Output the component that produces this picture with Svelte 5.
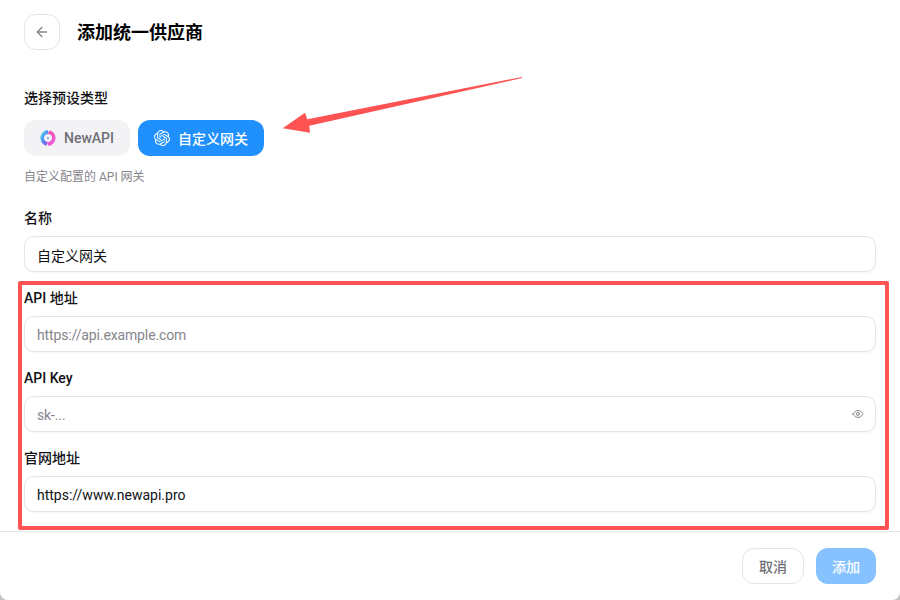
<script lang="ts">
  let showKey = false;
  let name = '自定义网关';
  let baseUrl = '';
  let apiKey = '';
  let website = 'https://www.newapi.pro';
</script>

<div class="page">
  <header class="head">
    <button class="back" type="button" aria-label="返回">
      <svg width="16" height="16" viewBox="0 0 24 24" fill="none" stroke="currentColor" stroke-width="2" stroke-linecap="round" stroke-linejoin="round">
        <path d="M19 12H5" />
        <path d="M12 19l-7-7 7-7" />
      </svg>
    </button>
    <h1>添加统一供应商</h1>
  </header>

  <main class="form">
    <section class="presets">
      <div class="label">选择预设类型</div>
      <div class="chips">
        <button class="chip" type="button">
          <svg width="16" height="16" viewBox="0 0 16 16">
            <defs>
              <linearGradient id="na" x1="0" y1="0.2" x2="0.9" y2="1">
                <stop offset="0" stop-color="#3fe0e6" />
                <stop offset="0.55" stop-color="#5f7cf5" />
                <stop offset="1" stop-color="#b04fe8" />
              </linearGradient>
              <linearGradient id="nb" x1="0.3" y1="0" x2="0.7" y2="1">
                <stop offset="0" stop-color="#f84fa8" />
                <stop offset="1" stop-color="#e85fe0" />
              </linearGradient>
            </defs>
            <path d="M7.6 .1A8 8 0 0 0 6.4 15.8L7.8 11.9A4 4 0 0 1 4 8 4 4 0 0 1 9.2 4.2Z" fill="url(#na)" />
            <path d="M8.4 15.9A8 8 0 0 0 9.6 .2L8.2 4.1A4 4 0 0 1 12 8 4 4 0 0 1 6.8 11.8Z" fill="url(#nb)" />
            <path d="M8 6.2l1.1 1.8L8 9.8 6.9 8Z" fill="#8fa2f0" />
          </svg>
          NewAPI
        </button>
        <button class="chip active" type="button">
          <svg width="16" height="16" viewBox="0 0 24 24" fill="currentColor">
            <path d="M22.28 9.82a5.98 5.98 0 0 0-.52-4.91 6.05 6.05 0 0 0-6.51-2.9A6.07 6.07 0 0 0 4.98 4.18a5.98 5.98 0 0 0-4 2.9 6.05 6.05 0 0 0 .74 7.1 5.98 5.98 0 0 0 .51 4.91 6.05 6.05 0 0 0 6.52 2.9A5.98 5.98 0 0 0 13.26 24a6.06 6.06 0 0 0 5.77-4.21 5.99 5.99 0 0 0 4-2.9 6.06 6.06 0 0 0-.75-7.07zM13.26 22.43a4.48 4.48 0 0 1-2.88-1.04l.14-.08 4.78-2.76a.79.79 0 0 0 .39-.68v-6.74l2.02 1.17a.07.07 0 0 1 .04.05v5.58a4.5 4.5 0 0 1-4.49 4.5zM3.6 18.3a4.47 4.47 0 0 1-.53-3.01l.14.08 4.78 2.76a.78.78 0 0 0 .78 0l5.84-3.37v2.33a.08.08 0 0 1-.03.06L9.74 19.95a4.5 4.5 0 0 1-6.14-1.65zM2.34 7.9a4.49 4.49 0 0 1 2.37-1.97v5.68a.77.77 0 0 0 .39.68l5.81 3.35-2.02 1.17a.08.08 0 0 1-.07 0L4 14.02A4.5 4.5 0 0 1 2.34 7.87zm16.6 3.86l-5.84-3.39 2.02-1.16a.08.08 0 0 1 .07 0l4.83 2.79a4.49 4.49 0 0 1-.68 8.1v-5.68a.79.79 0 0 0-.4-.66zm2.01-3.02l-.14-.09-4.77-2.78a.78.78 0 0 0-.79 0L9.41 9.23V6.9a.07.07 0 0 1 .03-.06l4.83-2.79a4.5 4.5 0 0 1 6.68 4.66zM8.31 12.86L6.29 11.7a.08.08 0 0 1-.04-.06V6.07a4.5 4.5 0 0 1 7.37-3.45l-.14.08L8.7 5.46a.79.79 0 0 0-.39.68zm1.1-2.37l2.6-1.5 2.61 1.5v3l-2.6 1.5-2.61-1.5z" />
          </svg>
          自定义网关
        </button>
      </div>
      <p class="hint">自定义配置的 API 网关</p>
    </section>

    <div class="field name">
      <label for="name">名称</label>
      <input id="name" bind:value={name} />
    </div>

    <div class="field">
      <label for="base">API 地址</label>
      <input id="base" bind:value={baseUrl} placeholder="https://api.example.com" />
    </div>

    <div class="field">
      <label for="key">API Key</label>
      <div class="with-icon">
        <input id="key" type={showKey ? 'text' : 'password'} bind:value={apiKey} placeholder="sk-..." />
        <button class="eye" type="button" aria-label="显示密钥" on:click={() => (showKey = !showKey)}>
          <svg width="12" height="12" viewBox="0 0 24 24" fill="none" stroke="currentColor" stroke-width="2" stroke-linecap="round" stroke-linejoin="round">
            <path d="M2 12s3.6-7 10-7 10 7 10 7-3.6 7-10 7-10-7-10-7z" />
            <circle cx="12" cy="12" r="3" />
          </svg>
        </button>
      </div>
    </div>

    <div class="field">
      <label for="site">官网地址</label>
      <input id="site" bind:value={website} />
    </div>
  </main>

  <footer class="foot">
    <button class="btn cancel" type="button">取消</button>
    <button class="btn add" type="button" disabled>添加</button>
  </footer>

  <!-- annotations drawn over the screenshot -->
  <div class="note-box"></div>
  <svg class="note-arrow" width="900" height="600" viewBox="0 0 900 600">
    <path d="M522 77 522 78 309.3 125.7 310 132.7 282.7 128.3 305 112.7 307.3 119.3Z" fill="#fd5353" />
  </svg>
</div>

<style>
  :global(body) {
    margin: 0;
    background: #c4c4c4;
  }

  .page {
    position: relative;
    width: 900px;
    height: 600px;
    overflow: hidden;
    display: flex;
    flex-direction: column;
    background: #fff;
    border-radius: 0 0 8px 8px;
    color: #111114;
    font-family: Roboto, "Noto Sans CJK SC", sans-serif;
    font-size: 14px;
  }

  .head {
    display: flex;
    align-items: center;
    gap: 17px;
    padding: 14px 24px 0;
  }

  .back {
    width: 36px;
    height: 36px;
    display: flex;
    align-items: center;
    justify-content: center;
    padding: 0;
    background: #fff;
    border: 1px solid #e5e5e8;
    border-radius: 12px;
    color: #85858c;
  }

  h1 {
    margin: 0;
    padding-top: 2px;
    font-size: 18px;
    font-weight: 600;
    line-height: 24px;
    color: #000;
  }

  .form {
    flex: 1;
    display: flex;
    flex-direction: column;
    padding: 38px 24px 0;
  }

  .label,
  label {
    display: block;
    font-size: 14px;
    font-weight: 500;
    line-height: 20px;
  }

  .chips {
    display: flex;
    gap: 8px;
    margin-top: 12px;
  }

  .chip {
    height: 36px;
    display: flex;
    align-items: center;
    gap: 8px;
    padding: 0 16px;
    border: 0;
    border-radius: 12px;
    background: #f3f3f5;
    color: #6f6f78;
    font: inherit;
    font-weight: 500;
  }

  .chip.active {
    background: #2090ff;
    color: #fff;
  }

  .hint {
    margin: 13px 0 0;
    font-size: 12px;
    line-height: 16px;
    color: #85858c;
  }

  .field {
    margin-top: 16px;
  }

  .field.name {
    margin-top: 23px;
  }

  .field label {
    margin-bottom: 8px;
  }

  input {
    display: block;
    width: 100%;
    height: 36px;
    box-sizing: border-box;
    padding: 1px 12px 0;
    background: #fff;
    border: 1px solid #e5e5e8;
    border-radius: 10px;
    box-shadow: 0 1px 2px rgba(0, 0, 0, 0.05);
    color: #111114;
    font: inherit;
    outline: none;
  }

  input::placeholder {
    color: #85858c;
    letter-spacing: -0.13px;
  }

  .with-icon {
    position: relative;
  }

  .eye {
    position: absolute;
    top: 12px;
    right: 12px;
    display: flex;
    padding: 0;
    border: 0;
    background: none;
    color: #85858c;
  }

  .foot {
    display: flex;
    justify-content: flex-end;
    gap: 12px;
    height: 69px;
    box-sizing: border-box;
    padding: 16px 24px 0;
    border-top: 1px solid #e5e5e8;
  }

  .btn {
    height: 36px;
    padding: 0 16px;
    border-radius: 12px;
    font: inherit;
    font-weight: 500;
  }

  .cancel {
    background: #fff;
    border: 1px solid #e5e5e8;
    color: #6f6f78;
  }

  .add {
    border: 0;
    background: #85c2ff;
    color: #fff;
  }

  .note-box {
    position: absolute;
    left: 18px;
    top: 281px;
    width: 871px;
    height: 249px;
    box-sizing: border-box;
    border: 4px solid #fd5353;
    border-radius: 2px;
  }

  .note-arrow {
    position: absolute;
    left: 0;
    top: 0;
    pointer-events: none;
  }
</style>
